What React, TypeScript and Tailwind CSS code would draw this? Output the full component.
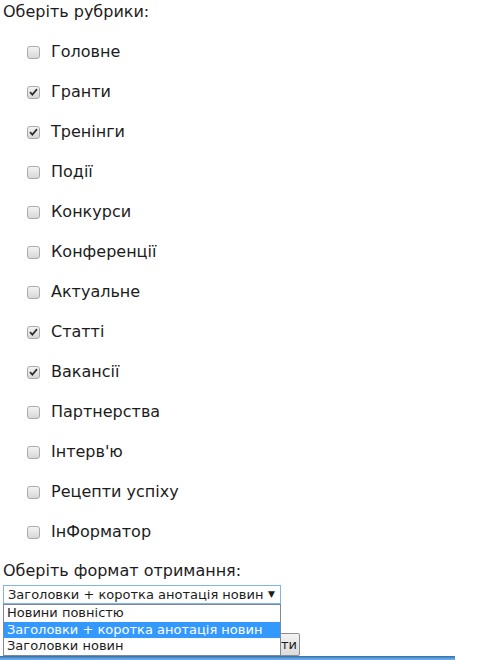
const RUBRICS: { label: string; checked: boolean }[] = [
  { label: 'Головне', checked: false },
  { label: 'Гранти', checked: true },
  { label: 'Тренінги', checked: true },
  { label: 'Події', checked: false },
  { label: 'Конкурси', checked: false },
  { label: 'Конференції', checked: false },
  { label: 'Актуальне', checked: false },
  { label: 'Статті', checked: true },
  { label: 'Вакансії', checked: true },
  { label: 'Партнерства', checked: false },
  { label: "Інтерв'ю", checked: false },
  { label: 'Рецепти успіху', checked: false },
  { label: 'ІнФорматор', checked: false },
]

const OPTIONS = ['Новини повністю', 'Заголовки + коротка анотація новин', 'Заголовки новин']

function Box({ checked }: { checked: boolean }) {
  return (
    <span className="w-[13px] h-[13px] rounded-[3px] border border-[#a9a9a9] bg-gradient-to-b from-[#f4f4f4] to-[#d8d8d8] flex items-center justify-center shrink-0">
      {checked && (
        <svg width="9" height="8" viewBox="0 0 9 8">
          <path d="M1 4.2 L3.4 6.6 L8 1.2" fill="none" stroke="#333" strokeWidth="1.8" />
        </svg>
      )}
    </span>
  )
}

export default function App() {
  return (
    <div className="h-[660px] w-[478px] overflow-hidden bg-white text-[#1c1c1c] font-['DejaVu_Sans',Verdana,sans-serif]">
      <div className="pl-[3px] text-[16px] leading-[24px]">Оберіть рубрики:</div>

      <div className="pl-[27px] mt-[8px]">
        {RUBRICS.map((r) => (
          <div key={r.label} className="h-[40px] flex items-center gap-[11px] text-[16px]">
            <Box checked={r.checked} />
            <span className="leading-none">{r.label}</span>
          </div>
        ))}
      </div>

      <div className="pl-[3px] mt-[7px] text-[16px] leading-[24px]">Оберіть формат отримання:</div>

      <div className="relative pl-[3px] mt-[2px]">
        <div className="w-[278px] h-[19px] border border-[#7eb4ea] bg-white flex items-center justify-between pl-[4px] pr-[5px] text-[13px] leading-none">
          <span>{OPTIONS[1]}</span>
          <span className="text-[9px]">▼</span>
        </div>

        <div className="mt-[29px] ml-[212px] w-[85px] h-[23px] border border-[#8e8e8e] rounded-[2px] bg-gradient-to-b from-[#f2f2f2] to-[#dcdcdc] text-[13px] flex items-center justify-end pr-[2px]">
          Підписати
        </div>

        <div className="absolute left-[3px] top-[19px] w-[278px] border border-[#7a8a9a] bg-white text-[13px]">
          {OPTIONS.map((o, i) => (
            <div
              key={o}
              className={
                i === 1
                  ? 'h-[16.5px] leading-[16.5px] pl-[3px] bg-[#3399ff] text-white'
                  : 'h-[16.5px] leading-[16.5px] pl-[3px]'
              }
            >
              {o}
            </div>
          ))}
        </div>
      </div>

      <div className="w-[455px] h-[5px] bg-gradient-to-b from-[#2f6fb0] via-[#5d9fd8] to-[#8cc0ea]" />
    </div>
  )
}
